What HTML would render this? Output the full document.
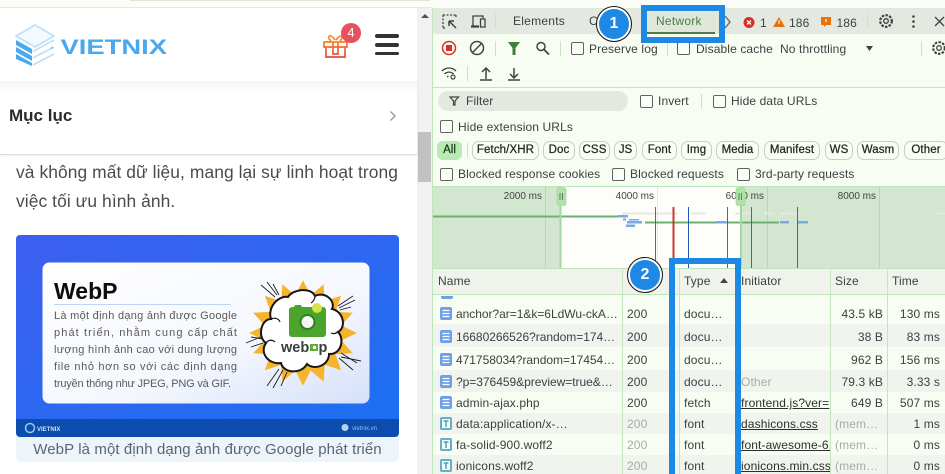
<!DOCTYPE html>
<html lang="vi"><head><meta charset="utf-8"><title>Network</title>
<style>
html,body{margin:0;padding:0;width:945px;height:474px;overflow:hidden;background:#fff}
body{position:relative;font-family:"Liberation Sans","Noto Sans CJK JP",sans-serif}
div,span.t{position:absolute}
.t{white-space:nowrap;line-height:16px;font-size:12px;color:#3c4043;letter-spacing:.12px}
.n{letter-spacing:-.03px}
.cb{width:11px;height:11px;border:1px solid #5f6360;border-radius:2px;background:#fbfef8}
.chip{top:141px;height:17px;border:1px solid #c9cdc6;border-radius:7px;font-size:11.500px;line-height:17px;text-align:center;color:#23271f;-webkit-text-stroke:.25px #23271f;letter-spacing:.1px;background:#f9fdf5;white-space:nowrap;overflow:hidden}
.v{width:1px;background:#c5e4c0}
.r{left:433px;width:512px}
.s{text-align:right}
.g{color:#a9aca6}
.u{text-decoration:underline;color:#2c2f2b}
.m{font-size:10px;color:#444;letter-spacing:0;width:62px;top:189px;text-align:right}
.ring{border-radius:50%;background:#1e88e5;border:2px solid #fff;outline:1px solid #111;color:#fff;font-weight:bold;font-size:16px;text-align:center;box-sizing:border-box}
svg{position:absolute;overflow:visible}
</style></head><body>
<!-- top strip -->
<div style="left:0;top:0;width:945px;height:8px;background:#fbfdf8"></div>
<div style="left:0;top:7px;width:432px;height:1px;background:#e5e9e0"></div>
<div style="left:130px;top:0;width:300px;height:1px;background:#dfe6d8"></div>
<!-- left page -->
<div style="left:0;top:8px;width:417px;height:466px;background:#fff"></div>
<div style="left:417px;top:8px;width:15px;height:466px;background:#f1f1f1"></div>
<div style="left:418px;top:132px;width:13px;height:50px;background:#c1c1c1"></div>
<svg style="left:420px;top:13px" width="10" height="6"><path d="M1 5L5 1L9 5Z" fill="#505050"/></svg>
<div style="left:0;top:81px;width:417px;height:73px;background:linear-gradient(#f3f3f3,#fff 12px);border-bottom:1px solid #dedede;box-shadow:0 1px 3px rgba(0,0,0,.06)"></div>
<!-- logo -->
<svg style="left:14px;top:22px;filter:blur(.3px)" width="156" height="46" viewBox="0 0 156 46">
<g fill="none" stroke-linejoin="round">
<path d="M2 14L21 3L40 14L21 25Z" stroke="#bfe0fa" stroke-width="1.800" fill="#f2f9ff"/>
<path d="M2 18L18 27V32L2 23Z" fill="#4aa8ee"/><path d="M2 25L18 34V39L2 30Z" fill="#4aa8ee"/><path d="M2 32L18 41V44L2 37Z" fill="#4aa8ee"/>
<path d="M19 29.500L40 18M19 36L40 25M19 43L40 32" stroke="#bfe0fa" stroke-width="1.800"/>
<circle cx="38" cy="26" r="1.200" fill="#8cc7f4"/>
</g>
<text x="46.500" y="32" font-family="Liberation Sans" font-weight="bold" font-size="21" fill="#4aa8ee" textLength="106.500" lengthAdjust="spacingAndGlyphs">VIETNIX</text>
</svg>
<!-- gift -->
<svg style="left:322px;top:31px" width="28" height="28" viewBox="0 0 28 28" fill="none" stroke-width="1.700">
<defs><linearGradient id="gg" gradientUnits="userSpaceOnUse" x1="0" y1="2" x2="0" y2="26"><stop offset="0" stop-color="#f6a02a"/><stop offset="1" stop-color="#e8483a"/></linearGradient></defs>
<path d="M2 11H25V16H2ZM4 16V26H23V16M11 11V23H16V11M9 10C4 6 8 1 13 9M18 10C22 6 19 2 14 9" stroke="url(#gg)"/>
</svg>
<div style="left:341px;top:23px;width:20px;height:20px;border-radius:50%;background:#e8515b;color:#fff;font-size:13px;line-height:20px;text-align:center">4</div>
<div style="left:375px;top:34px;width:24px;height:3.500px;background:#333;border-radius:2px"></div>
<div style="left:375px;top:43px;width:24px;height:3.500px;background:#333;border-radius:2px"></div>
<div style="left:375px;top:51.500px;width:24px;height:3.500px;background:#333;border-radius:2px"></div>
<span class="t" style="left:9px;top:107px;font-size:17px;font-weight:bold;color:#2b2b2b;line-height:18px;letter-spacing:0">Mục lục</span>
<svg style="left:389px;top:110px" width="8" height="12"><path d="M1.500 1.500L6 6L1.500 10.500" fill="none" stroke="#9a9a9a" stroke-width="1.400"/></svg>
<span class="t" style="left:16px;top:161px;font-size:17.400px;line-height:22px;color:#4b4b4b;letter-spacing:.08px">và không mất dữ liệu, mang lại sự linh hoạt trong</span>
<span class="t" style="left:16px;top:190px;font-size:17.400px;line-height:22px;color:#4b4b4b;letter-spacing:.08px">việc tối ưu hình ảnh.</span>
<!-- image -->
<div style="left:16px;top:235px;width:383px;height:227px;background:#edf4fb;border-radius:5px"></div>
<svg style="left:0;top:0;filter:blur(.35px)" width="417" height="474" viewBox="0 0 417 474">
<defs><linearGradient id="bl" x1="0" y1="0" x2="1" y2="1"><stop offset="0" stop-color="#3d5ff0"/><stop offset="1" stop-color="#1d6ff2"/></linearGradient>
<linearGradient id="cd" x1="0" y1="0" x2="1" y2="1"><stop offset="0" stop-color="#fff"/><stop offset=".6" stop-color="#f4f7fd"/><stop offset="1" stop-color="#d5e0fa"/></linearGradient></defs>
<path d="M16 239a4 4 0 0 1 4-4H395a4 4 0 0 1 4 4V419H16Z" fill="url(#bl)"/>
<path d="M16 419H399V433a4 4 0 0 1-4 4H20a4 4 0 0 1-4-4Z" fill="#0b4cae"/>
<rect x="42.500" y="262.500" width="327" height="141" rx="7" fill="url(#cd)"/>
<text x="54" y="299" font-family="Liberation Sans" font-weight="bold" font-size="23" fill="#0d0d0d">WebP</text>
<rect x="54" y="304" width="177" height="1" fill="#bcd6f5"/>
<g font-family="Liberation Sans" font-size="11" fill="#5a5a5a">
<text x="54" y="319" textLength="183">Là một định dạng ảnh được Google</text>
<text x="54" y="336" textLength="183">phát triển, nhằm cung cấp chất</text>
<text x="54" y="353" textLength="183">lượng hình ảnh cao với dung lượng</text>
<text x="54" y="370" textLength="183">file nhỏ hơn so với các định dạng</text>
<text x="54" y="387" textLength="177">truyền thống như JPEG, PNG và GIF.</text>
</g>
<g transform="translate(303,333)">
<polygon transform="scale(.93,.91)" fill="#f6b42c" points="58,0 41.200,8.200 53.600,22.200 34.900,23.300 41,41 23.300,34.900 22.200,53.600 8.200,41.200 0,58 -8.200,41.200 -22.200,53.600 -23.300,34.900 -41,41 -34.900,23.300 -53.600,22.200 -41.200,8.200 -58,0 -41.200,-8.200 -53.600,-22.200 -34.900,-23.300 -41,-41 -23.300,-34.900 -22.200,-53.600 -8.200,-41.200 0,-58 8.200,-41.200 22.200,-53.600 23.300,-34.900 41,-41 34.900,-23.300 53.600,-22.200 41.200,-8.200"/>
<g stroke="#1c1c1c" stroke-width=".9">
<path d="M-28-36L-42-48M-26-38L-36-51M-24-38L-30-49M35-27L50-37M36-25L52-33M37-23L48-26M-40 3L-57 10M-40 6L-52 4M-40 10L-52 14M38 20L54 30M38 24L58 28M36 25L50 37M-24 36L-36 53M-20 37L-30 55M-16 39L-22 53"/>
</g>
<path d="M-15-36C-10-44 8-46 12-37C22-42 33-32 29-24C40-22 44-6 35-1C42 6 38 22 26 21C26 32 12 38 4 31C-2 42-20 40-22 30C-34 32-44 20-37 10C-46 4-42-14-32-14C-36-26-24-38-15-36Z" fill="#fff" stroke="#161616" stroke-width="2"/>
<path d="M-32-14C-28-16-24-14-23-11M-37 10C-34 6-30 7-28 9M12-37C12-34 10-31 8-30M35-1C32 1 30 1 28 0" fill="none" stroke="#161616" stroke-width="1.200"/>
</g>
<path d="M289 310a3 3 0 0 1 3-3h2l1-2h6l1 2h21a3 3 0 0 1 3 3v24a3 3 0 0 1-3 3H292a3 3 0 0 1-3-3Z" fill="#4ba52d"/>
<circle cx="307.500" cy="322" r="8" fill="#2f7f1e"/><circle cx="307.500" cy="322" r="6" fill="#f5f5f5"/>
<circle cx="317" cy="308" r="5" fill="#d5e24a"/>
<text x="281" y="352" font-family="Liberation Sans" font-weight="bold" font-size="14.500" fill="#3c3c3c">web</text>
<rect x="310" y="344" width="8" height="7" fill="#62ad38"/><rect x="313" y="346" width="3" height="3" fill="#fff"/>
<text x="318.500" y="352" font-family="Liberation Sans" font-weight="bold" font-size="14.500" fill="#3c3c3c">p</text>
<circle cx="30" cy="428" r="4.500" fill="none" stroke="#9fc4ef" stroke-width="1.500"/>
<text x="37" y="431" font-family="Liberation Sans" font-weight="bold" font-size="6" fill="#cfe0f7">VIETNIX</text>
<circle cx="345" cy="427.500" r="3.500" fill="#b7d2f2"/>
<text x="352" y="430" font-family="Liberation Sans" font-size="6" fill="#9dbde8">vietnix.vn</text>
</svg>
<span class="t" style="left:16px;top:440px;width:383px;text-align:center;font-size:15px;line-height:19px;color:#5b6670;letter-spacing:.1px">WebP là một định dạng ảnh được Google phát triển</span>

<!-- devtools -->
<div style="left:432px;top:8px;width:513px;height:466px;background:#f8fdf3"></div>
<div style="left:432px;top:8px;width:1px;height:466px;background:#bfe6bb"></div>
<div style="left:433px;top:8px;width:512px;height:26px;background:#e3e9e0"></div>
<div style="left:648px;top:12px;width:68px;height:22px;background:#dfe7d9"></div>
<div style="left:647px;top:32px;width:68px;height:2px;background:#4d7d46"></div>
<svg style="left:433px;top:8px" width="512" height="80" viewBox="433 8 512 80" fill="none" stroke="#3f4340" stroke-width="1.300">
<path d="M443 15h13M443 15v13M443 28h3M456 15v3" stroke-dasharray="2 1.500"/><path d="M449 21l7 7M449 21h5M449 21v5" stroke-width="1.500"/>
<path d="M471 26h8M473 26V16h10v2M471 27h8"/><rect x="480.500" y="19" width="4.500" height="8"/>
<path d="M725 16l5 6-5 6" stroke="#5f6360"/>
<circle cx="449" cy="48" r="6.500" stroke="#d93025" stroke-width="1.500"/><rect x="446" y="45" width="6" height="6" fill="#d93025" stroke="none"/>
<circle cx="477" cy="48" r="6.500" stroke-width="1.500"/><path d="M472.500 52.500l9-9" stroke-width="1.500"/>
<path d="M508 42h12l-4.500 6v7h-3v-7Z" fill="#3f7f3a" stroke="none"/>
<circle cx="541" cy="46.500" r="4" stroke-width="1.500"/><path d="M544 49.500l5 5" stroke-width="1.800"/>
<path d="M442 71c4-4 10-4 14 0M444.500 74c2.500-2.500 6.500-2.500 9 0M447 77l1.500-1" stroke-width="1.300"/><circle cx="453" cy="77" r="2" stroke-width="1.200"/>
<path d="M486 79v-10M482 72l4-4 4 4M480 80h12" stroke-width="1.500"/>
<path d="M514 68v9M510 74l4 4 4-4M508 80h12" stroke-width="1.500"/>
<circle cx="749" cy="22.500" r="5.500" fill="#d93025" stroke="none"/><path d="M747 20.500l4 4M751 20.500l-4 4" stroke="#fff" stroke-width="1.300"/>
<path d="M779 17l6 10h-12Z" fill="#e8710a" stroke="none"/><path d="M779 20v4" stroke="#fff" stroke-width="1"/>
<path d="M821 17h10v8h-5l-2 2v-2h-3Z" fill="#e8710a" stroke="none"/><path d="M826 19v3" stroke="#fff"/>
<circle cx="886" cy="21" r="2.300"/><circle cx="886" cy="21" r="5.800" stroke-width="2.200" stroke-dasharray="2.500 1.300"/>
<circle cx="913.500" cy="16.500" r="1.300" fill="#3f4340" stroke="none"/><circle cx="913.500" cy="21.500" r="1.300" fill="#3f4340" stroke="none"/><circle cx="913.500" cy="26.500" r="1.300" fill="#3f4340" stroke="none"/>
<path d="M935 17l9 9M944 17l-9 9"/>
<circle cx="939" cy="48" r="2.300"/><circle cx="939" cy="48" r="5.800" stroke-width="2.200" stroke-dasharray="2.500 1.300"/>
<path d="M866 46h7l-3.500 5Z" fill="#3f4340" stroke="none"/>
</svg>
<div class="v" style="left:495px;top:14px;height:14px"></div>
<div class="v" style="left:867px;top:14px;height:14px"></div>
<div class="v" style="left:495px;top:41px;height:15px"></div>
<div class="v" style="left:560px;top:41px;height:15px"></div>
<div class="v" style="left:667px;top:41px;height:15px"></div>
<div class="v" style="left:921px;top:41px;height:15px"></div>
<div class="v" style="left:467px;top:66px;height:15px"></div>
<span class="t" style="left:513px;top:12.500px;letter-spacing:.25px">Elements</span>
<span class="t" style="left:589px;top:12.500px">C</span>
<span class="t" style="left:656px;top:12.500px;color:#4d7d46;letter-spacing:.25px">Network</span>
<span class="t" style="left:760px;top:14.500px">1</span>
<span class="t" style="left:789px;top:14.500px">186</span>
<span class="t" style="left:836.500px;top:14.500px">186</span>
<div class="cb" style="left:571px;top:42px"></div><span class="t" style="left:589px;top:40.500px">Preserve log</span>
<div class="cb" style="left:677px;top:42px"></div><span class="t" style="left:696px;top:40.500px">Disable cache</span>
<span class="t" style="left:780px;top:40.500px">No throttling</span>
<div style="left:433px;top:87px;width:512px;height:1px;background:#c5e4c0"></div>
<div style="left:438px;top:91px;width:190px;height:20px;border-radius:10px;background:#e3e9e0"></div>
<svg style="left:449px;top:96px" width="11" height="10"><path d="M1 1h8.500L6 5v4H4.500V5Z" fill="none" stroke="#3f4340" stroke-width="1.200"/></svg>
<span class="t" style="left:466px;top:93px">Filter</span>
<div class="cb" style="left:640px;top:95px"></div><span class="t" style="left:658px;top:93px">Invert</span>
<div class="v" style="left:701px;top:94px;height:15px"></div>
<div class="cb" style="left:713px;top:95px"></div><span class="t" style="left:731px;top:93px">Hide data URLs</span>
<div class="cb" style="left:440px;top:120px"></div><span class="t" style="left:458px;top:118.500px">Hide extension URLs</span>
<div style="left:437px;top:141px;width:25px;height:19px;border-radius:6px;background:#b9eab4;font-size:11.500px;-webkit-text-stroke:.25px #1d3a1a;line-height:19px;text-align:center;color:#1d3a1a">All</div>
<div class="v" style="left:467px;top:143px;height:14px"></div>
<div class="chip" style="left:472px;width:65px">Fetch/XHR</div>
<div class="chip" style="left:543px;width:30px">Doc</div>
<div class="chip" style="left:579px;width:29px">CSS</div>
<div class="chip" style="left:614px;width:21px">JS</div>
<div class="chip" style="left:642px;width:33px">Font</div>
<div class="chip" style="left:681px;width:29px">Img</div>
<div class="chip" style="left:716px;width:41px">Media</div>
<div class="chip" style="left:764px;width:54px">Manifest</div>
<div class="chip" style="left:825px;width:26px">WS</div>
<div class="chip" style="left:857px;width:40px">Wasm</div>
<div class="chip" style="left:904px;width:42px">Other</div>
<div class="cb" style="left:440px;top:168px"></div><span class="t" style="left:458px;top:166px">Blocked response cookies</span>
<div class="cb" style="left:612px;top:168px"></div><span class="t" style="left:630px;top:166px">Blocked requests</span>
<div class="cb" style="left:737px;top:168px"></div><span class="t" style="left:755px;top:166px">3rd-party requests</span>
<!-- overview -->
<div style="left:433px;top:187px;width:512px;height:81px;background:#fdfef9"></div>
<div style="left:433px;top:186px;width:512px;height:1px;background:#bfe6bb"></div>
<div style="left:433px;top:187px;width:127px;height:81px;background:#d3e6d0"></div>
<div style="left:741px;top:187px;width:204px;height:81px;background:#d3e6d0"></div>
<div class="v" style="left:545px;top:187px;height:81px;background:#b5d8ae"></div>
<div class="v" style="left:657px;top:187px;height:81px;background:#dcefd6"></div>
<div class="v" style="left:767px;top:187px;height:81px;background:#b5d8ae"></div>
<div class="v" style="left:879px;top:187px;height:81px;background:#b5d8ae"></div>
<span class="t m" style="left:480px">2000 ms</span>
<span class="t m" style="left:592px">4000 ms</span>
<span class="t m" style="left:702px">6000 ms</span>
<span class="t m" style="left:814px">8000 ms</span>
<svg style="left:433px;top:187px" width="512" height="81" viewBox="433 187 512 81">
<g fill="#e6e8e2"><rect x="622" y="212.500" width="55" height="2"/><rect x="691" y="212.500" width="15" height="2"/><rect x="735" y="212.500" width="17" height="2"/><rect x="764" y="212.500" width="9" height="2"/><rect x="780" y="212.500" width="17" height="2"/><rect x="936" y="212.500" width="9" height="2"/></g>
<rect x="433" y="215.500" width="185" height="2" fill="#6cb26c"/><rect x="618" y="215" width="10" height="2.500" fill="#7ba8e6"/>
<rect x="645" y="221.500" width="134" height="2" fill="#6cb26c"/>
<g fill="#7ba8e6"><rect x="716" y="221" width="9" height="2.500"/><rect x="726" y="221" width="2" height="2.500"/><rect x="780" y="221" width="9" height="2.500"/><rect x="798" y="221" width="10" height="2.500"/><rect x="623" y="218.500" width="3" height="2"/><rect x="629" y="219" width="10" height="1.500"/><rect x="627" y="221" width="6" height="2.500"/><rect x="633" y="221" width="9" height="2.500"/><rect x="626" y="224.500" width="9" height="2.500"/></g>
<g fill="#c83a34"><rect x="655" y="207" width="1" height="61"/><rect x="672.500" y="207" width="2" height="61"/><rect x="727" y="207" width="1" height="61"/><rect x="751" y="207" width="1" height="61"/><rect x="797" y="207" width="1" height="61"/></g>
<rect x="688" y="207" width="1" height="61" fill="#2456b4"/>
<rect x="559.500" y="187" width="2" height="81" fill="#a5d8a0"/><rect x="740" y="187" width="2" height="81" fill="#a5d8a0"/>
<rect x="557" y="187.500" width="9" height="18" rx="2" fill="#afe3a8" stroke="#9bcf95" stroke-width=".6"/><path d="M560 193v7M562.500 193v7" stroke="#56705a" stroke-width=".9"/>
<rect x="736" y="187.500" width="9" height="18" rx="2" fill="#afe3a8" stroke="#9bcf95" stroke-width=".6"/><path d="M739 193v7M741.500 193v7" stroke="#56705a" stroke-width=".9"/>
</svg>
<!-- table -->
<div style="left:433px;top:268px;width:512px;height:1px;background:#bfe6bb"></div>
<div style="left:433px;top:269px;width:512px;height:25px;background:#f0f3ec"></div>
<div style="left:433px;top:294px;width:512px;height:1px;background:#bfe6bb"></div>
<div class="r" style="top:324px;height:23px;background:#f1f4ee"></div>
<div class="r" style="top:370px;height:22px;background:#f1f4ee"></div>
<div class="r" style="top:413px;height:21px;background:#f1f4ee"></div>
<div class="r" style="top:455px;height:19px;background:#f1f4ee"></div>
<div class="v" style="left:622px;top:269px;height:205px"></div>
<div class="v" style="left:679px;top:269px;height:205px"></div>
<div class="v" style="left:830px;top:269px;height:205px"></div>
<div class="v" style="left:887px;top:269px;height:205px"></div>
<span class="t" style="left:438px;top:273px">Name</span>
<span class="t" style="left:684px;top:273px">Type</span>
<svg style="left:719px;top:277px" width="10" height="7"><path d="M1 6L5 1L9 6Z" fill="#444"/></svg>
<span class="t" style="left:741px;top:273px">Initiator</span>
<span class="t" style="left:835px;top:273px">Size</span>
<span class="t" style="left:892px;top:273px">Time</span>
<div style="left:441px;top:296px;width:12px;height:3px;background:#6f9fe6;border-radius:0 0 2px 2px"></div>
<svg style="left:439px;top:305px;height:169px" width="16" height="169" viewBox="0 0 16 169">
<g id="d"><rect x="1" y="2" width="12" height="13" rx="2" fill="#6f9fe6"/><path d="M3.500 5.500h7M3.500 8.500h7M3.500 11.500h7" stroke="#fff" stroke-width="1.200"/></g>
<use href="#d" y="23"/><use href="#d" y="46"/><use href="#d" y="68"/><use href="#d" y="89"/>
<g id="f" transform="translate(0,110)"><rect x="1" y="2" width="12" height="13" rx="2" fill="#5fb0c8"/><rect x="3" y="4" width="8" height="9" fill="#f5fbf7"/><path d="M4.500 6h5M7 6v6" stroke="#3e91ab" stroke-width="1.300"/></g>
<use href="#f" y="21"/><use href="#f" y="42"/>
</svg>
<span class="t n" style="left:456px;top:306px">anchor?ar=1&amp;k=6LdWu-ckA…</span><span class="t" style="left:627px;top:306px">200</span><span class="t" style="left:684px;top:306px">docu…</span><span class="t s" style="left:830px;width:53px;top:306px">43.5 kB</span><span class="t s" style="left:887px;width:53px;top:306px">130 ms</span>
<span class="t n" style="left:456px;top:329px">16680266526?random=174…</span><span class="t" style="left:627px;top:329px">200</span><span class="t" style="left:684px;top:329px">docu…</span><span class="t s" style="left:830px;width:53px;top:329px">38 B</span><span class="t s" style="left:887px;width:53px;top:329px">83 ms</span>
<span class="t n" style="left:456px;top:352px">471758034?random=17454…</span><span class="t" style="left:627px;top:352px">200</span><span class="t" style="left:684px;top:352px">docu…</span><span class="t s" style="left:830px;width:53px;top:352px">962 B</span><span class="t s" style="left:887px;width:53px;top:352px">156 ms</span>
<span class="t n" style="left:456px;top:374px">?p=376459&amp;preview=true&amp;…</span><span class="t" style="left:627px;top:374px">200</span><span class="t" style="left:684px;top:374px">docu…</span><span class="t g" style="left:741px;top:374px">Other</span><span class="t s" style="left:830px;width:53px;top:374px">79.3 kB</span><span class="t s" style="left:887px;width:53px;top:374px">3.33 s</span>
<span class="t" style="left:456px;top:395px">admin-ajax.php</span><span class="t" style="left:627px;top:395px">200</span><span class="t" style="left:684px;top:395px">fetch</span><span class="t u" style="left:741px;top:395px;width:89px;overflow:hidden">frontend.js?ver=</span><span class="t s" style="left:830px;width:53px;top:395px">649 B</span><span class="t s" style="left:887px;width:53px;top:395px">507 ms</span>
<span class="t" style="left:456px;top:416px">data:application/x-…</span><span class="t g" style="left:627px;top:416px">200</span><span class="t" style="left:684px;top:416px">font</span><span class="t u" style="left:741px;top:416px">dashicons.css</span><span class="t g" style="left:835px;top:416px">(mem…</span><span class="t s" style="left:887px;width:53px;top:416px">1 ms</span>
<span class="t" style="left:456px;top:437px">fa-solid-900.woff2</span><span class="t g" style="left:627px;top:437px">200</span><span class="t" style="left:684px;top:437px">font</span><span class="t u" style="left:741px;top:437px;width:89px;overflow:hidden">font-awesome-6.</span><span class="t g" style="left:835px;top:437px">(mem…</span><span class="t s" style="left:887px;width:53px;top:437px">0 ms</span>
<span class="t" style="left:456px;top:458px;height:16px;overflow:hidden">ionicons.woff2</span><span class="t g" style="left:627px;top:458px;height:16px;overflow:hidden">200</span><span class="t" style="left:684px;top:458px;height:16px;overflow:hidden">font</span><span class="t u" style="left:741px;top:458px;width:89px;height:16px;overflow:hidden">ionicons.min.css.</span><span class="t g" style="left:835px;top:458px;height:16px;overflow:hidden">(mem…</span><span class="t s" style="left:887px;width:53px;top:458px;height:16px;overflow:hidden">0 ms</span>
<!-- annotations -->
<div style="left:641px;top:5px;width:72px;height:26px;border:6px solid #1e88e5"></div>
<div style="left:669px;top:258px;width:60px;height:210px;border:6px solid #1e88e5;border-bottom:0"></div>
<div class="ring" style="left:597px;top:7px;width:34px;height:34px;line-height:30px">1</div>
<div class="ring" style="left:628px;top:258px;width:34px;height:34px;line-height:30px">2</div>
</body></html>
